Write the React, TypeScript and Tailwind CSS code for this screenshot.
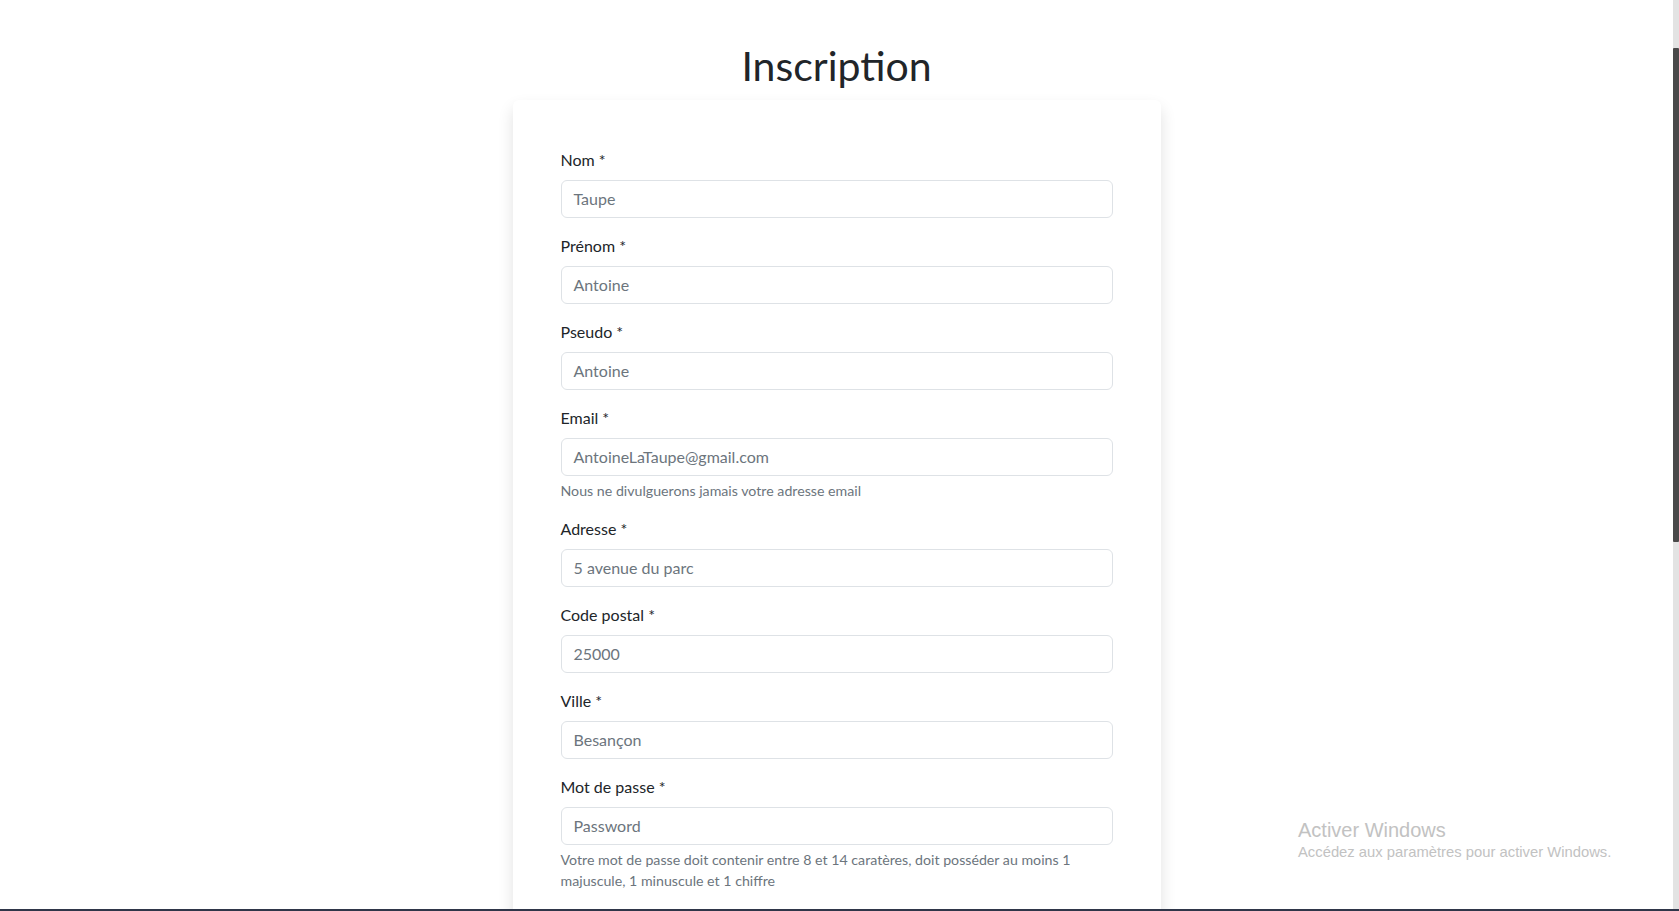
import React from 'react';

const fields = [
  { label: 'Nom *', value: 'Taupe' },
  { label: 'Prénom *', value: 'Antoine' },
  { label: 'Pseudo *', value: 'Antoine' },
  { label: 'Email *', value: 'AntoineLaTaupe@gmail.com', help: 'Nous ne divulguerons jamais votre adresse email' },
  { label: 'Adresse *', value: '5 avenue du parc' },
  { label: 'Code postal *', value: '25000' },
  { label: 'Ville *', value: 'Besançon' },
  { label: 'Mot de passe *', value: 'Password', password: true },
];

function Field({ label, value, help, password }: { label: string; value: string; help?: string; password?: boolean }) {
  return (
    <div className="mb-4">
      <label className="block mb-2 text-[16px] leading-6 text-[#212529]">{label}</label>
      <div className="h-[38px] w-full rounded-[6px] border border-[#dee2e6] bg-white px-3 flex items-center text-[16px] text-[#6c757d]">
        {value}
      </div>
      {help && <div className="mt-1 text-[14.2px] leading-[21px] text-[#6c757d]">{help}</div>}
      {password && (
        <div className="mt-1 text-[14.2px] leading-[21px] text-[#6c757d]">
          Votre mot de passe doit contenir entre 8 et 14 caratères, doit posséder au moins 1
          <br />
          majuscule, 1 minuscule et 1 chiffre
        </div>
      )}
    </div>
  );
}

export default function App() {
  return (
    <div className="relative h-[911px] w-full overflow-hidden bg-white flex" style={{ fontFamily: 'Lato, "Noto Sans", sans-serif' }}>
      {/* Page */}
      <div className="flex-1 flex flex-col items-center pt-[42px]">
        <h1 className="text-[41px] leading-[48px] text-[#212529] mb-[10px]">Inscription</h1>
        <div className="w-[648px] bg-white px-12 pt-12 pb-12 shadow-[0_0.5rem_1rem_rgba(0,0,0,0.12)] rounded-[6px]">
          {fields.map((f) => (
            <Field key={f.label} {...f} />
          ))}
        </div>
      </div>

      {/* Scrollbar */}
      <div className="w-[6px] h-[909px] bg-[#e3e3e3] flex flex-col">
        <div className="h-[48px]" />
        <div className="h-[494px] bg-[#4a4a4a] rounded-[1px]" />
      </div>

      {/* Windows watermark */}
      <div className="absolute left-[1298px] top-[817px] text-[#c2c2c2]" style={{ fontFamily: '"Liberation Sans", Arial, sans-serif' }}>
        <div className="text-[20px] leading-[26px]">Activer Windows</div>
        <div className="text-[14.8px] leading-[18px]">Accédez aux paramètres pour activer Windows.</div>
      </div>

      {/* Taskbar edge */}
      <div className="absolute left-0 right-0 bottom-0 h-[2px] bg-[#2f3649]" />
    </div>
  );
}
